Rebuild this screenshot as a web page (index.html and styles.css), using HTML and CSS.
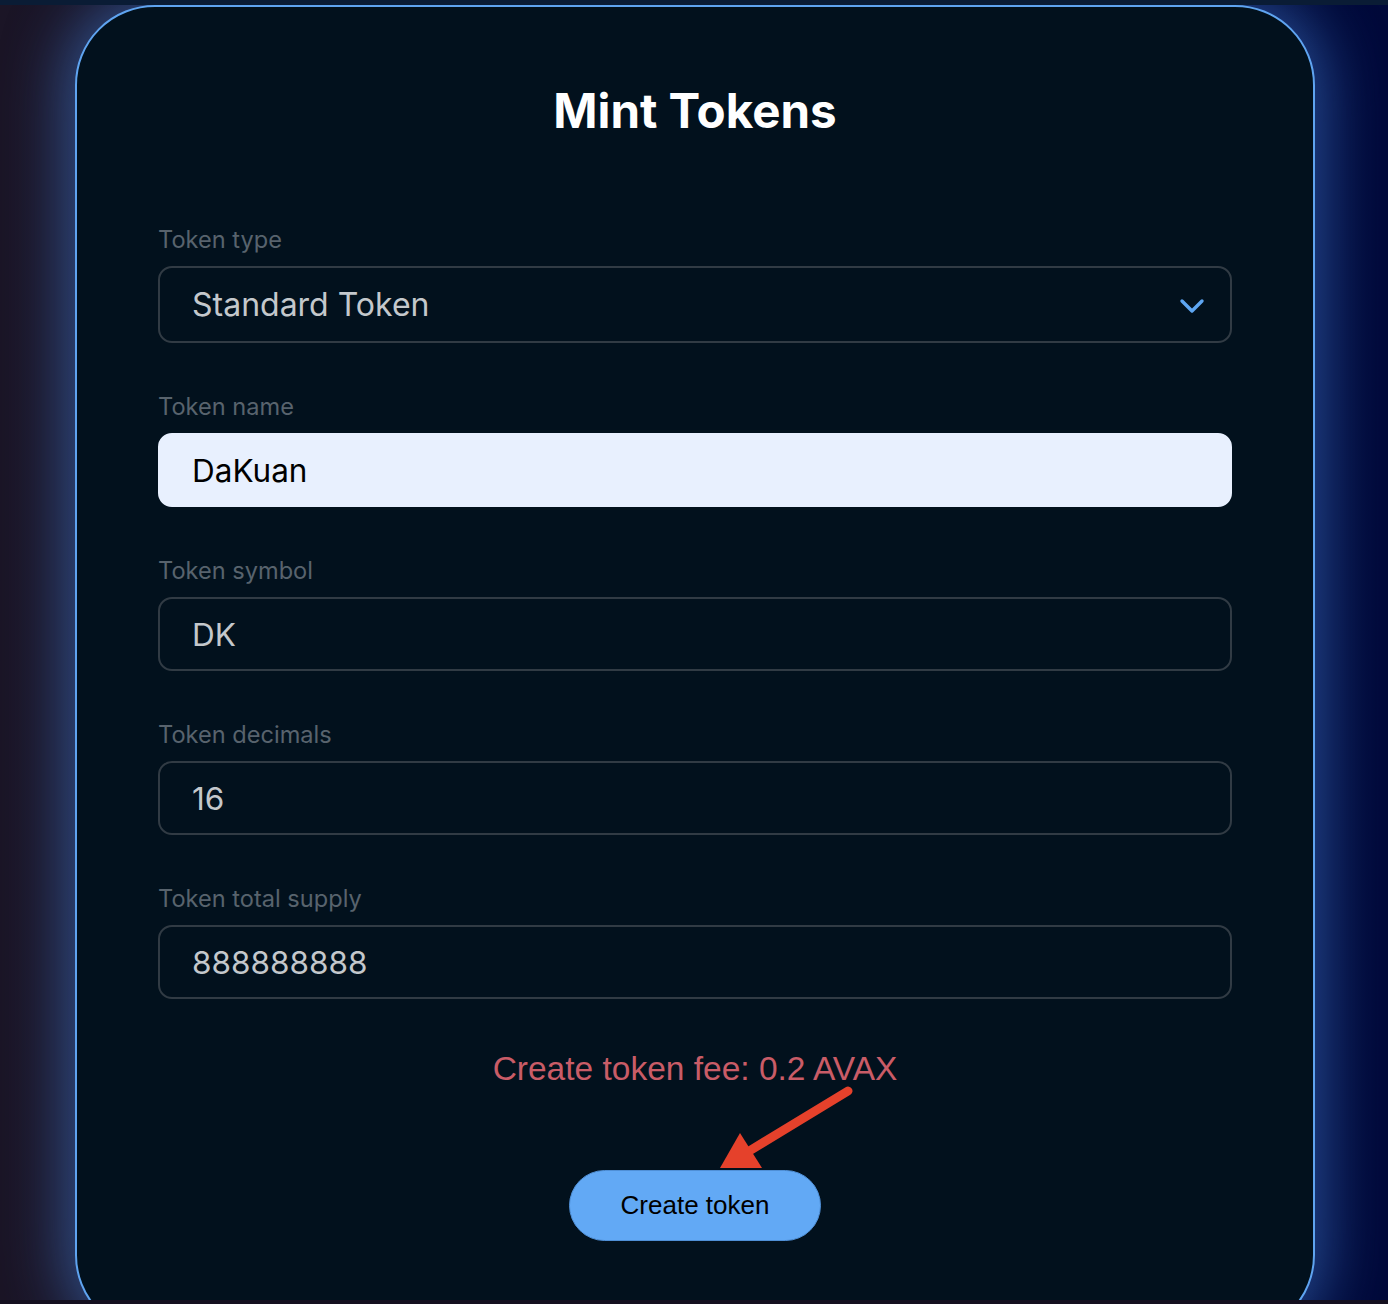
FILE: index.html
```
<!DOCTYPE html>
<html lang="en">
<head>
  <meta charset="UTF-8" />
  <title>Mint Tokens</title>
  <link rel="stylesheet" href="styles.css">
</head>
<body>
  <div class="top-strip"></div>

  <main class="stage">
    <section class="mint-card">
      <h1>Mint Tokens</h1>

      <form class="mint-form" onsubmit="return false;">
        <div class="field">
          <label for="tokenType">Token type</label>
          <div class="select-wrap">
            <select id="tokenType" class="control">
              <option>Standard Token</option>
            </select>
            <svg class="chevron" width="26" height="18" viewBox="0 0 26 18">
              <path d="M3 4 L13 14 L23 4" fill="none" stroke="#5ea6f2" stroke-width="3.4" stroke-linecap="round" stroke-linejoin="round" />
            </svg>
          </div>
        </div>

        <div class="field">
          <label for="tokenName">Token name</label>
          <input id="tokenName" class="control filled" type="text" value="DaKuan" />
        </div>

        <div class="field">
          <label for="tokenSymbol">Token symbol</label>
          <input id="tokenSymbol" class="control" type="text" value="DK" />
        </div>

        <div class="field">
          <label for="tokenDecimals">Token decimals</label>
          <input id="tokenDecimals" class="control" type="text" value="16" />
        </div>

        <div class="field">
          <label for="tokenSupply">Token total supply</label>
          <input id="tokenSupply" class="control" type="text" value="888888888" />
        </div>

        <p class="fee">Create token fee: 0.2 AVAX</p>

        <button class="create-btn" type="submit">Create token</button>
      </form>

      <!-- annotation arrow pointing at the button -->
      <svg class="hint-arrow" width="170" height="100" viewBox="0 0 170 100">
        <line x1="46" y1="73" x2="148" y2="11" stroke="#e5412b" stroke-width="9" stroke-linecap="round" />
        <polygon points="20,88 40,53 62,88" fill="#e5412b" />
      </svg>
    </section>
  </main>

  <div class="bottom-strip"></div>
</body>
</html>
```

FILE: styles.css
```
* {
  box-sizing: border-box;
}
html, body {
  height: 100%;
}
body {
  margin: 0;
  height: 1304px;
  overflow: hidden;
  display: flex;
  flex-direction: column;
  background: linear-gradient(90deg, #1b1526 0%, #0c1535 50%, #00093a 100%);
  font-family: "Inter", "Noto Sans", sans-serif;
}
.top-strip {
  height: 5px;
  flex: none;
  background: #0a1c35;
}
.bottom-strip {
  height: 4px;
  flex: none;
  background: #150f1f;
}
.stage {
  flex: 1;
  overflow: hidden;
  display: flex;
  justify-content: center;
  padding-left: 2px;
}

/* card */
.mint-card {
  position: relative;
  width: 1240px;
  height: 1330px;
  flex: none;
  background: #02111d;
  border: 2px solid #5fa4f0;
  border-radius: 80px;
  padding: 75px 81px 0;
  box-shadow: 0 0 60px 10px rgba(70, 130, 220, 0.55);
}
h1 {
  margin: 0;
  color: #ffffff;
  font-size: 47.5px;
  line-height: 58px;
  font-weight: 700;
  text-align: center;
}

.mint-form {
  margin-top: 86px;
  display: flex;
  flex-direction: column;
}
.field {
  display: flex;
  flex-direction: column;
  margin-bottom: 50px;
}
.field label {
  color: #58636d;
  font-size: 23.6px;
  line-height: 28px;
  margin-bottom: 12px;
}
.control {
  width: 100%;
  height: 74px;
  padding: 0 32px;
  border: 2px solid #313b44;
  border-radius: 14px;
  background: transparent;
  color: #c4c8cc;
  font-family: "Inter", "Noto Sans", sans-serif;
  font-size: 31.5px;
  outline: none;
}
.control.filled {
  background: #e8f0fe;
  border-color: #e8f0fe;
  color: #000000;
}

.select-wrap {
  position: relative;
}
select.control {
  height: 77px;
  font-size: 32px;
  appearance: none;
  -webkit-appearance: none;
}
.chevron {
  position: absolute;
  right: 27px;
  top: 31px;
  pointer-events: none;
}

.fee {
  margin: 0;
  text-align: center;
  color: #c95c67;
  font-family: "Liberation Sans", Arial, sans-serif;
  font-size: 33.5px;
  line-height: 40px;
}
.create-btn {
  align-self: center;
  margin-top: 81px;
  width: 252px;
  height: 71px;
  border: 1px solid #4f8fd6;
  border-radius: 36px;
  background: #62a9f5;
  color: #000000;
  font-family: "Liberation Sans", Arial, sans-serif;
  font-size: 26px;
  cursor: pointer;
}

.hint-arrow {
  position: absolute;
  left: 623px;
  top: 1073px;
}
```
